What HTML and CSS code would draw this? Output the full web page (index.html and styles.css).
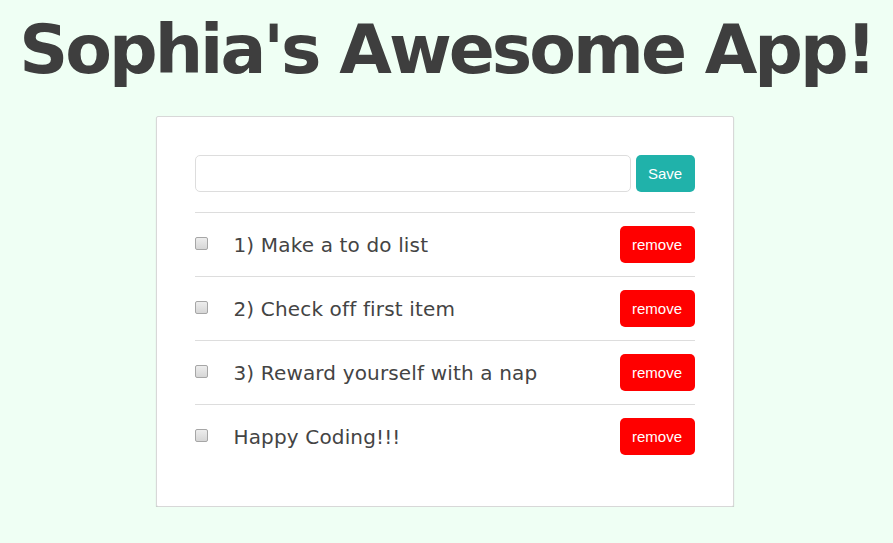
FILE: index.html
```html
<!DOCTYPE html>
<html lang="en">
<head>
<meta charset="utf-8">
<title>Sophia's Awesome App!</title>
<link rel="stylesheet" href="styles.css">
</head>
<body>
<h1 class="title">Sophia's Awesome App!</h1>
<main class="card">
  <form class="add-row">
    <input class="add-input" type="text" aria-label="New item">
    <button class="btn btn-save" type="button">Save</button>
  </form>
  <ul class="list">
    <li class="item">
      <input class="check" type="checkbox">
      <span class="item-text">1) Make a to do list</span>
      <button class="btn btn-remove" type="button">remove</button>
    </li>
    <li class="item">
      <input class="check" type="checkbox">
      <span class="item-text">2) Check off first item</span>
      <button class="btn btn-remove" type="button">remove</button>
    </li>
    <li class="item">
      <input class="check" type="checkbox">
      <span class="item-text">3) Reward yourself with a nap</span>
      <button class="btn btn-remove" type="button">remove</button>
    </li>
    <li class="item">
      <input class="check" type="checkbox">
      <span class="item-text">Happy Coding!!!</span>
      <button class="btn btn-remove" type="button">remove</button>
    </li>
  </ul>
</main>
</body>
</html>
```
FILE: styles.css
```css
html, body {
  margin: 0;
  padding: 0;
}
body {
  background: #effff4;
  padding-top: 9px;
  font-family: "DejaVu Sans", Verdana, sans-serif;
  color: #444;
}
.title {
  margin: 0 0 25px;
  text-align: center;
  font-family: "DejaVu Sans", Verdana, sans-serif;
  font-weight: bold;
  font-size: 68px;
  letter-spacing: -3px;
  color: #3e3e3e;
  line-height: 82px;
  white-space: nowrap;
}
.card {
  width: 500px;
  margin: 0 auto;
  padding: 38px;
  background: #fff;
  border: 1px solid #d8d8d8;
  border-radius: 2px;
  box-shadow:
    0 1px 1px rgba(0,0,0,0.2),
    0 4px 0 -2px #eeeeee,
    0 4px 1px -1px rgba(0,0,0,0.35);
  position: relative;
  left: -2px;
}
.add-row {
  display: flex;
  gap: 5px;
  margin: 0 0 20px;
}
.add-input {
  flex: 1;
  height: 37px;
  box-sizing: border-box;
  border: 1px solid #ddd;
  border-radius: 5px;
  padding: 0 10px;
  font-size: 16px;
  outline: none;
}
.btn {
  border: none;
  color: #fff;
  font-family: "Liberation Sans", Arial, sans-serif;
  font-size: 15px;
  border-radius: 5px;
  cursor: pointer;
  padding: 0;
}
.btn-save {
  width: 59px;
  height: 37px;
  background: #20b2aa;
}
.btn-remove {
  width: 75px;
  height: 37px;
  background: #ff0000;
  margin-left: auto;
}
.list {
  list-style: none;
  margin: 0;
  padding: 0;
}
.item {
  display: flex;
  align-items: center;
  border-top: 1px solid #ddd;
  padding: 13px 0;
}
.check {
  appearance: none;
  -webkit-appearance: none;
  width: 13px;
  height: 13px;
  margin: 0 26px 0 0;
  border: 1px solid #a6a6a6;
  border-radius: 2px;
  background: linear-gradient(#ededed, #d6d6d6);
  box-sizing: border-box;
  position: relative;
  top: -1px;
}
.item-text {
  font-size: 20px;
  color: #444;
  line-height: 24px;
  letter-spacing: 0.15px;
}
```
